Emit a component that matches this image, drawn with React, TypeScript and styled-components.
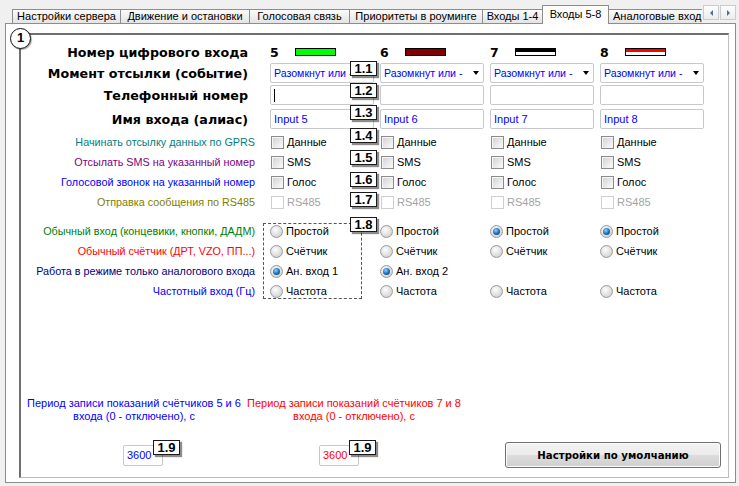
import React from 'react';
import styled, { createGlobalStyle, css } from 'styled-components';

const GlobalStyle = createGlobalStyle`
  html, body { margin: 0; padding: 0; background: #f0f0f0; }
  body { font-family: "Liberation Sans", Arial, sans-serif; }
  * { box-sizing: border-box; }
`;

const Window = styled.div`
  width: 739px;
  height: 486px;
  background: #f0f0f0;
  padding: 5px 3px 0 5px;
  overflow: hidden;
`;

const TabBar = styled.div`
  display: flex;
  align-items: flex-start;
  height: 19px;
  position: relative;
  z-index: 2;
`;

const TabViewport = styled.div`
  width: 698px;
  height: 19px;
  overflow: hidden;
  display: flex;
  align-items: flex-end;
  padding-left: 7px;
`;

const Tab = styled.div<{ $w: number; $active?: boolean }>`
  flex: none;
  width: ${p => p.$w}px;
  height: 14px;
  margin-bottom: 1px;
  margin-left: -1px;
  border: 1px solid #8d8d8d;
  border-bottom: none;
  background: linear-gradient(#fbfbfb, #e4e4e4);
  font: 11px "Liberation Sans", Arial, sans-serif;
  color: #000;
  line-height: 12px;
  text-align: center;
  white-space: nowrap;
  overflow: hidden;
  &:first-child { margin-left: 0; }
  ${p => p.$active && css`
    height: 19px;
    margin-bottom: 0;
    background: #fcfcfc;
    line-height: 14px;
    padding-top: 1px;
    position: relative;
    z-index: 1;
  `}
`;

const ClippedTab = styled(Tab)`
  text-align: left;
  padding-left: 4px;
`;

const ScrollButtons = styled.div`
  display: flex;
  gap: 1px;
  margin-left: 1px;
`;

const ScrollButton = styled.div<{ $dir: 'left' | 'right' }>`
  width: 16px;
  height: 15px;
  border: 1px solid #c9ccd2;
  background: linear-gradient(#fdfdfd, #ececec);
  display: flex;
  align-items: center;
  justify-content: center;
  &::after {
    content: '';
    width: 0;
    height: 0;
    border-top: 3px solid transparent;
    border-bottom: 3px solid transparent;
    ${p => p.$dir === 'left'
      ? css`border-right: 3px solid #4d6f9a;`
      : css`border-left: 3px solid #4d6f9a;`}
  }
`;

const Panel = styled.div`
  width: 731px;
  height: 460px;
  margin-top: -1px;
  border: 1px solid #8d8d8d;
  background: #ffffff;
  padding: 9px 0 0 13px;
  position: relative;
  z-index: 1;
`;

const Frame = styled.div`
  position: relative;
  width: 710px;
  height: 445px;
  border-top: 2px solid #707070;
  border-left: 2px solid #707070;
  border-right: 1px solid #bdbdbd;
  border-bottom: 1px solid #bdbdbd;
  padding-top: 7px;
`;

const Marker = styled.div`
  position: absolute;
  left: -11px;
  top: -7px;
  width: 21px;
  height: 21px;
  border-radius: 50%;
  border: 1.5px solid #111;
  background: #fff;
  box-shadow: 1px 1px 1px rgba(0,0,0,0.35);
  font: bold 13px "Liberation Sans", Arial, sans-serif;
  line-height: 18px;
  text-align: center;
  color: #000;
`;

const Row = styled.div<{ $mt?: number; $h?: number }>`
  display: grid;
  grid-template-columns: 243px repeat(4, 104px);
  column-gap: 6px;
  height: ${p => p.$h ?? 20}px;
  margin-top: ${p => p.$mt ?? 0}px;
`;

const BoldLabel = styled.div`
  font: bold 12.7px "DejaVu Sans", Verdana, sans-serif;
  color: #000;
  text-align: right;
  padding-right: 16px;
  align-self: center;
  white-space: nowrap;
`;

const SmallLabel = styled.div<{ $color: string }>`
  font-size: 10.8px;
  color: ${p => p.$color};
  text-align: right;
  padding-right: 9px;
  white-space: nowrap;
  height: 20px;
  line-height: 20px;
`;

const Cell = styled.div`
  position: relative;
  display: flex;
  align-items: center;
`;

const Badge = styled.div<{ $top: number; $right?: number }>`
  position: absolute;
  right: ${p => p.$right ?? -3}px;
  top: ${p => p.$top}px;
  width: 27px;
  height: 15px;
  border: 1px solid #1a1a1a;
  background: #fff;
  box-shadow: 2px 2px 1px rgba(0,0,0,0.45);
  font: bold 13px "Liberation Sans", Arial, sans-serif;
  line-height: 13px;
  text-align: center;
  color: #000;
  z-index: 3;
`;

const InputNumber = styled.span`
  width: 25px;
  font: bold 12.5px "DejaVu Sans", Verdana, sans-serif;
  color: #000;
`;

const ColorBar = styled.span<{ $fill: string; $split?: boolean }>`
  width: 41px;
  height: 8px;
  border: 1px solid #000;
  background: ${p => p.$split
    ? `linear-gradient(${p.$fill} 0 55%, #fff 55% 100%)`
    : p.$fill};
`;

const Field = styled.div<{ $w?: number; $h?: number; $color?: string }>`
  width: ${p => p.$w ?? 104}px;
  height: ${p => p.$h ?? 20}px;
  border: 1px solid #c7c9cc;
  border-radius: 2px;
  background: #fff;
  padding-left: 3px;
  display: flex;
  align-items: center;
  font-size: 11px;
  color: ${p => p.$color ?? '#0000ff'};
  white-space: nowrap;
  overflow: hidden;
  position: relative;
`;

const SelectText = styled.span`
  flex: none;
  font-size: 10.6px;
`;

const DropArrow = styled.span`
  width: 0;
  height: 0;
  margin: 0 4px 0 auto;
  border-left: 3.5px solid transparent;
  border-right: 3.5px solid transparent;
  border-top: 4px solid #000;
`;

const Caret = styled.span`
  width: 1px;
  height: 13px;
  background: #000;
`;

const Option = styled.label<{ $disabled?: boolean }>`
  display: flex;
  align-items: center;
  gap: 3px;
  height: 20px;
  font-size: 11px;
  color: ${p => (p.$disabled ? '#a3a3a3' : '#000')};
  white-space: nowrap;
`;

const CheckBox = styled.span<{ $disabled?: boolean }>`
  width: 13px;
  height: 13px;
  margin-left: 1px;
  border: 1px solid ${p => (p.$disabled ? '#cfcfcf' : '#8b8b8b')};
  background: ${p => (p.$disabled ? '#fff' : 'linear-gradient(135deg, #cfcfcf, #f4f4f4 80%)')};
  box-shadow: ${p => (p.$disabled ? 'none' : 'inset 1px 1px 0 #f7f7f7')};
`;

const RadioDot = styled.span<{ $on?: boolean }>`
  width: 13px;
  height: 13px;
  border-radius: 50%;
  border: 1px solid #9a9a9a;
  background: radial-gradient(circle at 40% 35%, #fdfdfd, #d4d4d4 75%);
  display: flex;
  align-items: center;
  justify-content: center;
  &::after {
    content: '';
    display: ${p => (p.$on ? 'block' : 'none')};
    width: 7px;
    height: 7px;
    border-radius: 50%;
    background: radial-gradient(circle at 40% 35%, #8fd3ff, #1769b8 55%, #0b3f7a);
  }
`;

const RadioColumn = styled.div<{ $dashed?: boolean }>`
  position: relative;
  display: flex;
  flex-direction: column;
  ${p => p.$dashed && css`
    &::before {
      content: '';
      position: absolute;
      left: -7px;
      right: 12px;
      top: 2px;
      bottom: 2px;
      border: 1px dashed #555;
    }
  `}
`;

const LabelColumn = styled.div`
  display: flex;
  flex-direction: column;
`;

const RadioSection = styled.div`
  display: grid;
  grid-template-columns: 243px repeat(4, 104px);
  column-gap: 6px;
  margin-top: 9px;
`;

const BottomTexts = styled.div`
  display: flex;
  margin-top: 96px;
  padding-left: 3px;
`;

const Note = styled.div<{ $color: string }>`
  width: 220px;
  text-align: center;
  font-size: 11px;
  line-height: 13px;
  color: ${p => p.$color};
`;

const Controls = styled.div`
  display: flex;
  align-items: center;
  height: 26px;
  margin-top: 19px;
`;

const CounterWrap = styled.div<{ $ml: number }>`
  position: relative;
  margin-left: ${p => p.$ml}px;
`;

const DefaultsButton = styled.button`
  margin-left: 146px;
  width: 216px;
  height: 26px;
  border: 1px solid #707070;
  border-radius: 3px;
  background: linear-gradient(#f3f3f3 0%, #ebebeb 48%, #dcdcdc 52%, #cfcfcf 100%);
  box-shadow: inset 0 0 0 1px #fcfcfc;
  font: bold 10.2px "DejaVu Sans", Verdana, sans-serif;
  color: #000;
  padding: 0;
`;

const inputs = [5, 6, 7, 8];
const bars: { fill: string; split?: boolean }[] = [
  { fill: '#00ff00' },
  { fill: '#800000' },
  { fill: '#000000', split: true },
  { fill: '#ff0000', split: true },
];

const checkRows = [
  { label: 'Начинать отсылку данных по GPRS', color: '#008080', opt: 'Данные', badge: '1.4', top: -4 },
  { label: 'Отсылать SMS на указанный номер', color: '#800080', opt: 'SMS', badge: '1.5', top: -2 },
  { label: 'Голосовой звонок на указанный номер', color: '#0000ff', opt: 'Голос', badge: '1.6', top: 0 },
  { label: 'Отправка сообщения по RS485', color: '#808000', opt: 'RS485', badge: '1.7', top: 0, disabled: true },
];

const radioLabels = [
  { label: 'Обычный вход (концевики, кнопки, ДАДМ)', color: '#008000' },
  { label: 'Обычный счётчик (ДРТ, VZO, ПП...)', color: '#ff0000' },
  { label: 'Работа в режиме только аналогового входа', color: '#000080' },
  { label: 'Частотный вход (Гц)', color: '#0000ff' },
];

const radioCols: { label: string; on: boolean }[][] = [
  [
    { label: 'Простой', on: false },
    { label: 'Счётчик', on: false },
    { label: 'Ан. вход 1', on: true },
    { label: 'Частота', on: false },
  ],
  [
    { label: 'Простой', on: false },
    { label: 'Счётчик', on: false },
    { label: 'Ан. вход 2', on: true },
    { label: 'Частота', on: false },
  ],
  [
    { label: 'Простой', on: true },
    { label: 'Счётчик', on: false },
    { label: '', on: false },
    { label: 'Частота', on: false },
  ],
  [
    { label: 'Простой', on: true },
    { label: 'Счётчик', on: false },
    { label: '', on: false },
    { label: 'Частота', on: false },
  ],
];

const tabs = [
  { t: 'Настройки сервера', w: 109 },
  { t: 'Движение и остановки', w: 130 },
  { t: 'Голосовая связь', w: 101 },
  { t: 'Приоритеты в роуминге', w: 134 },
  { t: 'Входы 1-4', w: 61 },
  { t: 'Входы 5-8', w: 67, active: true },
];

export default function App() {
  return (
    <>
      <GlobalStyle />
      <Window>
        <TabBar>
          <TabViewport>
            {tabs.map(tab => (
              <Tab key={tab.t} $w={tab.w} $active={tab.active}>{tab.t}</Tab>
            ))}
            <ClippedTab $w={110}>Аналоговые вход</ClippedTab>
          </TabViewport>
          <ScrollButtons>
            <ScrollButton $dir="left" />
            <ScrollButton $dir="right" />
          </ScrollButtons>
        </TabBar>
        <Panel>
          <Frame>
            <Marker>1</Marker>

            <Row>
              <BoldLabel>Номер цифрового входа</BoldLabel>
              {inputs.map((n, i) => (
                <Cell key={n}>
                  <InputNumber>{n}</InputNumber>
                  <ColorBar $fill={bars[i].fill} $split={bars[i].split} />
                </Cell>
              ))}
            </Row>

            <Row $mt={1}>
              <BoldLabel>Момент отсылки (событие)</BoldLabel>
              {inputs.map(n => (
                <Cell key={n}>
                  <Field>
                    <SelectText>Разомкнут или -</SelectText>
                    <DropArrow />
                  </Field>
                  {n === 5 && <Badge $top={-2}>1.1</Badge>}
                </Cell>
              ))}
            </Row>

            <Row $mt={2}>
              <BoldLabel>Телефонный номер</BoldLabel>
              {inputs.map(n => (
                <Cell key={n}>
                  <Field>{n === 5 && <Caret />}</Field>
                  {n === 5 && <Badge $top={-2}>1.2</Badge>}
                </Cell>
              ))}
            </Row>

            <Row $mt={4}>
              <BoldLabel>Имя входа (алиас)</BoldLabel>
              {inputs.map(n => (
                <Cell key={n}>
                  <Field>Input {n}</Field>
                  {n === 5 && <Badge $top={-4}>1.3</Badge>}
                </Cell>
              ))}
            </Row>

            {checkRows.map((r, ri) => (
              <Row key={r.badge} $mt={ri === 0 ? 3 : 0}>
                <SmallLabel $color={r.color}>{r.label}</SmallLabel>
                {inputs.map(n => (
                  <Cell key={n}>
                    <Option $disabled={r.disabled}>
                      <CheckBox $disabled={r.disabled} />
                      {r.opt}
                    </Option>
                    {n === 5 && <Badge $top={r.top}>{r.badge}</Badge>}
                  </Cell>
                ))}
              </Row>
            ))}

            <RadioSection>
              <LabelColumn>
                {radioLabels.map(l => (
                  <SmallLabel key={l.label} $color={l.color}>{l.label}</SmallLabel>
                ))}
              </LabelColumn>
              {radioCols.map((col, ci) => (
                <RadioColumn key={ci} $dashed={ci === 0}>
                  {col.map((o, oi) => (
                    <Option key={oi}>
                      {o.label && (
                        <>
                          <RadioDot $on={o.on} />
                          {o.label}
                        </>
                      )}
                    </Option>
                  ))}
                  {ci === 0 && <Badge $top={-4}>1.8</Badge>}
                </RadioColumn>
              ))}
            </RadioSection>

            <BottomTexts>
              <Note $color="#0000ff">
                Период записи показаний счётчиков 5 и 6<br />входа (0 - отключено), с
              </Note>
              <Note $color="#ff0000">
                Период записи показаний счётчиков 7 и 8<br />входа (0 - отключено), с
              </Note>
            </BottomTexts>

            <Controls>
              <CounterWrap $ml={102}>
                <Field $w={40} $h={21}>3600</Field>
                <Badge $top={-5} $right={-17}>1.9</Badge>
              </CounterWrap>
              <CounterWrap $ml={156}>
                <Field $w={40} $h={21} $color="#ff0000">3600</Field>
                <Badge $top={-5} $right={-17}>1.9</Badge>
              </CounterWrap>
              <DefaultsButton>Настройки по умолчанию</DefaultsButton>
            </Controls>
          </Frame>
        </Panel>
      </Window>
    </>
  );
}
